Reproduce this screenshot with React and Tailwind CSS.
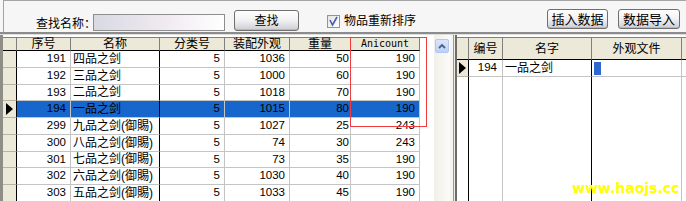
import React from "react";

const leftCols = [
  { title: "序号", w: "w-[54px]", cell: "justify-end pr-[4px]", line: "border-[#c4c4c4]" },
  { title: "名称", w: "w-[89px]", cell: "justify-start pl-[2px]", line: "border-black" },
  { title: "分类号", w: "w-[65px]", cell: "justify-end pr-[4px]", line: "border-[#c4c4c4]" },
  { title: "装配外观", w: "w-[65px]", cell: "justify-end pr-[4px]", line: "border-[#c4c4c4]" },
  { title: "重量", w: "w-[61px]", cell: "justify-end pr-[1px]", line: "border-[#c4c4c4]" },
  { title: "Anicount", w: "w-[69px]", cell: "justify-end pr-[4px]", line: "border-[#c4c4c4]", mono: true },
];

const rows = [
  ["191", "四品之剑", "5", "1036", "50", "190"],
  ["192", "三品之剑", "5", "1000", "60", "190"],
  ["193", "二品之剑", "5", "1018", "70", "190"],
  ["194", "一品之剑", "5", "1015", "80", "190"],
  ["299", "九品之剑(御賜)", "5", "1027", "25", "243"],
  ["300", "八品之剑(御賜)", "5", "74", "30", "243"],
  ["301", "七品之剑(御賜)", "5", "73", "35", "190"],
  ["302", "六品之剑(御賜)", "5", "1030", "40", "190"],
  ["303", "五品之剑(御賜)", "5", "1033", "45", "190"],
];

const rightCols = [
  { title: "编号", w: "w-[34px]", line: "border-[#c4c4c4]" },
  { title: "名字", w: "w-[89px]", line: "border-black" },
  { title: "外观文件", w: "w-[90px]", line: "border-[#c4c4c4]" },
];

const Arrow = () => (
  <svg width="7" height="12" viewBox="0 0 7 12">
    <path d="M0 0 L7 6 L0 12 Z" fill="#000" />
  </svg>
);

const Button = ({ children, className }) => (
  <div
    className={`flex items-center justify-center rounded-[3px] border border-[#6f6f6f] bg-gradient-to-b from-white via-[#f1f1f3] to-[#cdced4] text-[12px] leading-none text-black shadow-[inset_0_-1px_0_#b8b9c0] ${className}`}
  >
    {children}
  </div>
);

const Toolbar = () => (
  <div className="flex h-[32px] bg-[#f6f6f6] pl-[3px]">
    <div className="flex flex-1 items-start border-l border-t border-[#a4a4a4]">
      <div className="ml-[32px] mt-[13px] h-[17px] w-[57px] whitespace-nowrap font-['Noto_Sans_CJK_SC',sans-serif] text-[12px] leading-[17px]">
        查找名称：
      </div>
      <div className="mt-[13px] h-[17px] w-[132px] border border-[#8e8e8e] bg-gradient-to-r from-[#d7dae3] via-[#efe8ef] to-white" />
      <Button className="ml-[9px] mt-[9px] h-[21px] w-[65px]">查找</Button>
      <div className="ml-[28px] mt-[14px] h-[13px] w-[13px] border border-[#8796b0] bg-gradient-to-br from-[#e4e4e0] to-white">
        <svg width="11" height="11" viewBox="0 0 11 11">
          <path d="M2 4 L4.5 9 L9 1" fill="none" stroke="#4a5db4" strokeWidth="1.6" />
        </svg>
      </div>
      <div className="ml-[4px] mt-[14px] h-[13px] whitespace-nowrap text-[12px] leading-[13px]">
        物品重新排序
      </div>
      <Button className="ml-auto mt-[8px] h-[20px] w-[61px] text-[13px]">插入数据</Button>
      <Button className="ml-[10px] mr-[6px] mt-[8px] h-[20px] w-[62px] text-[13px]">数据导入</Button>
    </div>
  </div>
);

const LeftGrid = () => (
  <div className="flex w-[450px] border-l-[3px] border-[#8e8e86]">
    <div className="flex flex-1 flex-col bg-white pt-[2px]">
      <div className="flex h-[20px]">
        <div className="w-[14px] border-y border-r border-y-[#808080] border-r-[#808080] border-b-black bg-[#ece9d8]" />
        {leftCols.map((c) => (
          <div
            key={c.title}
            className={`${c.w} flex items-center justify-center border-y border-r border-[#808080] border-b-black bg-[#ece9d8] leading-none ${
              c.mono ? "font-['DejaVu_Sans_Mono',monospace] text-[10px]" : "text-[12px]"
            }`}
          >
            {c.title}
          </div>
        ))}
      </div>
      {rows.map((r, i) => {
        const sel = i === 3;
        return (
          <div key={r[0]} className="flex h-[16.75px] shrink-0">
            <div className="flex w-[14px] items-center justify-center border-b border-r border-b-[#b8b4a4] border-r-black bg-[#ece9d8]">
              {sel && <Arrow />}
            </div>
            {leftCols.map((c, j) => (
              <div
                key={c.title}
                className={`${c.w} ${c.cell} ${c.line} flex items-center whitespace-nowrap border-b border-r border-b-[#c4c4c4] leading-none text-black ${
                  j === 1 ? "text-[12px]" : "text-[11.5px]"
                } ${sel ? "bg-[#1666cc]" : "bg-white"}`}
              >
                {r[j]}
              </div>
            ))}
          </div>
        );
      })}
    </div>
    <div className="w-[16px] bg-gradient-to-r from-[#f1efe8] to-[#fcfbf8] pl-[1px] pt-[4px]">
      <div className="flex h-[14px] w-[14px] items-center justify-center rounded-[2px] border border-[#b3c6f2] bg-gradient-to-b from-[#dbe6fd] to-[#bcd0f8]">
        <svg width="8" height="6" viewBox="0 0 8 6">
          <path d="M1 5 L4 2 L7 5" fill="none" stroke="#4d6185" strokeWidth="1.8" />
        </svg>
      </div>
    </div>
  </div>
);

const Splitter = () => (
  <div className="flex w-[5px]">
    <div className="w-[3px] bg-[#f7f5f1]" />
    <div className="w-px bg-[#9a9a90]" />
    <div className="w-px bg-[#efede7]" />
  </div>
);

const RightGrid = () => (
  <div className="flex flex-1 flex-col border-l-2 border-[#6e6e66] bg-white pt-[2px]">
    <div className="flex h-[23px] shrink-0">
      <div className="w-[12px] border-y border-r border-[#808080] border-b-black bg-[#ece9d8]" />
      {rightCols.map((c) => (
        <div
          key={c.title}
          className={`${c.w} flex items-center justify-center border-y border-r border-[#808080] border-b-black bg-[#ece9d8] text-[12px] leading-none`}
        >
          {c.title}
        </div>
      ))}
      <div className="flex-1 border-y border-[#808080] border-b-black bg-[#ece9d8]" />
    </div>
    <div className="flex h-[17px] shrink-0">
      <div className="flex w-[12px] items-center justify-center border-b border-r border-b-[#b8b4a4] border-r-black bg-[#ece9d8]">
        <Arrow />
      </div>
      <div className="flex w-[34px] items-center justify-end border-b border-r border-[#c4c4c4] pr-[5px] text-[11.5px] leading-none">
        194
      </div>
      <div className="flex w-[89px] items-center border-b border-r border-b-[#c4c4c4] border-r-black pl-[2px] text-[12px] leading-none">
        一品之剑
      </div>
      <div className="w-[90px] border-b border-r border-[#c4c4c4] pl-[2px] pt-[2px]">
        <div className="h-[13px] w-[7px] bg-[#2f68d0]" />
      </div>
      <div className="flex-1 border-b border-[#c4c4c4]" />
    </div>
    <div className="flex flex-1">
      <div className="w-[12px] border-r border-black" />
      <div className="w-[34px] border-r border-[#c4c4c4]" />
      <div className="w-[89px] border-r border-black" />
      <div className="w-[90px] border-r border-[#c4c4c4]" />
      <div className="flex-1" />
    </div>
  </div>
);

export default function App() {
  return (
    <div className="relative h-[201px] w-[686px] overflow-hidden bg-[#f6f6f6] font-['Liberation_Sans','Noto_Sans_CJK_SC',sans-serif] text-black">
      <Toolbar />
      <div className="h-[3px] border-t-2 border-[#8c8c8c] bg-[#dedede]" />
      <div className="flex h-[166px]">
        <LeftGrid />
        <Splitter />
        <RightGrid />
      </div>
      <div className="pointer-events-none absolute left-[350px] top-[37px] h-[90px] w-[77px] border border-[#f23c3c]" />
      <div className="pointer-events-none absolute left-[572px] top-[181px] font-['DejaVu_Sans',sans-serif] text-[14px] font-bold leading-none text-[#ffff00]">
        www.haojs.cc
      </div>
    </div>
  );
}
